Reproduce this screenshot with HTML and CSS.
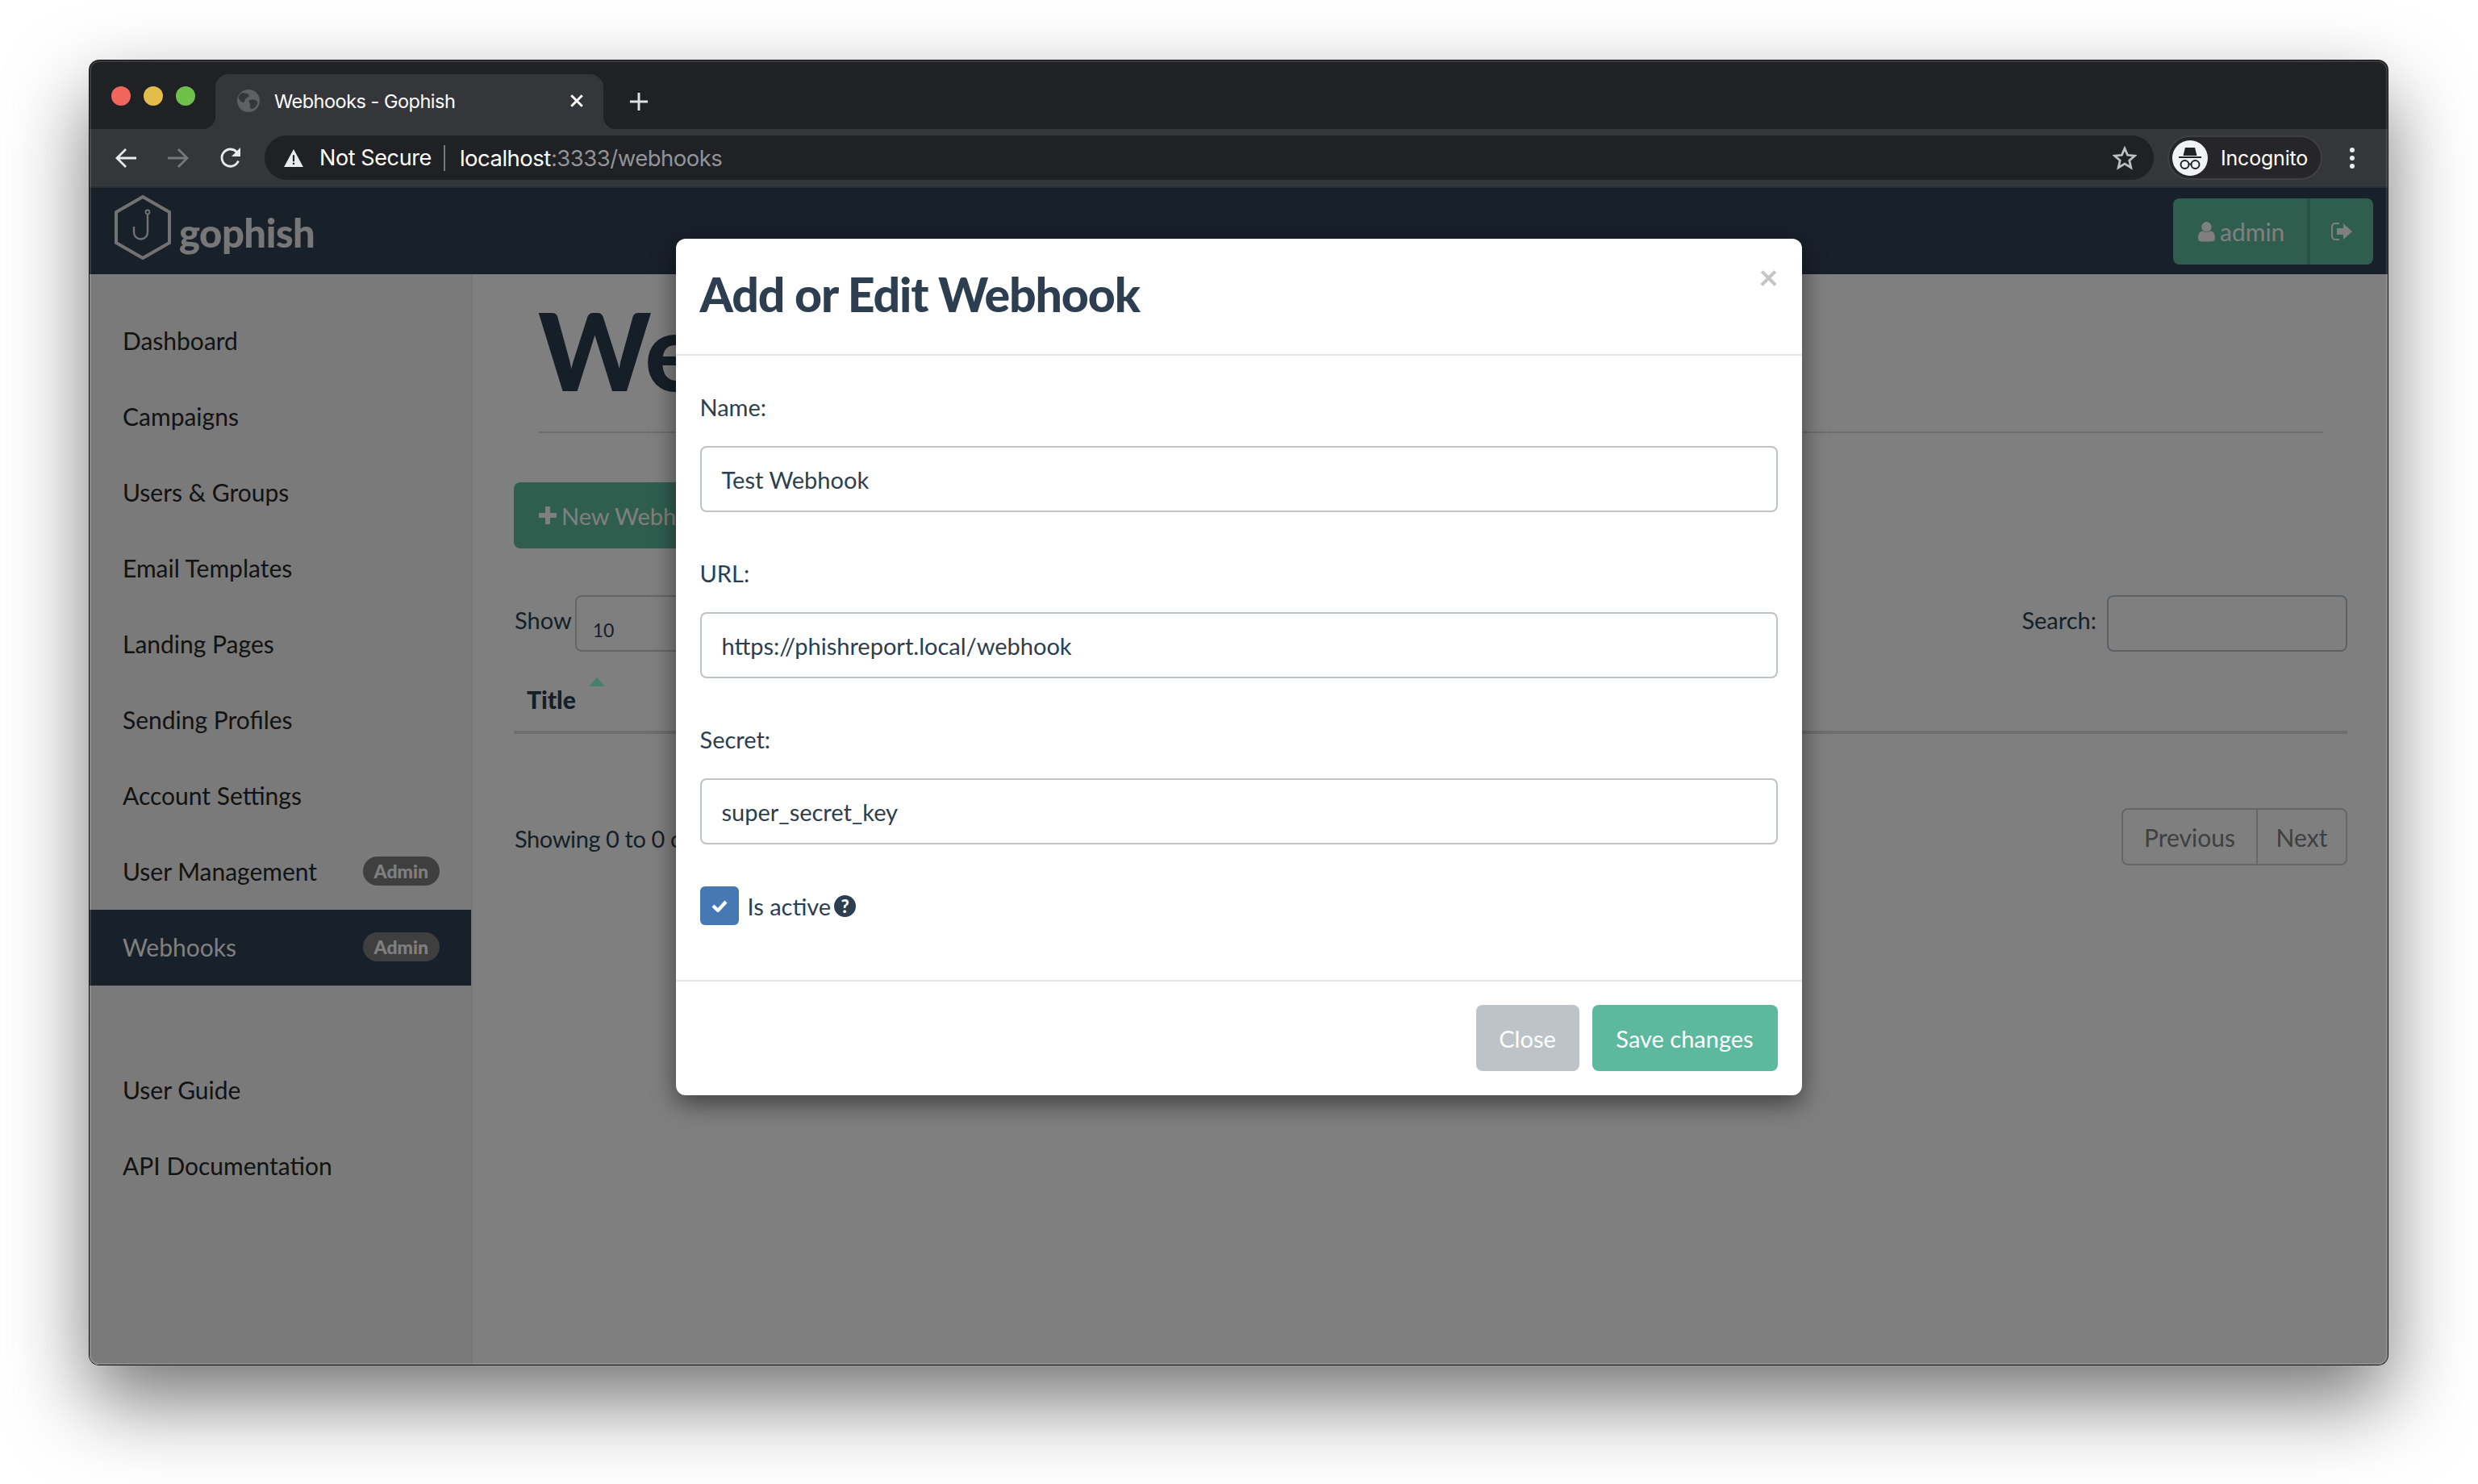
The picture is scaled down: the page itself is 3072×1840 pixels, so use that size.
FILE: index.html
```html
<!DOCTYPE html>
<html lang="en">
<head>
    <meta charset="UTF-8">
    <title>Webhooks - Gophish</title>
    <link rel="stylesheet" href="styles.css">
</head>
<body>
    <div class="window">
        <div class="tabstrip">
            <div class="lights">
                <span class="light red"></span>
                <span class="light yellow"></span>
                <span class="light green"></span>
            </div>
            <div class="tab">
                <svg class="favicon" viewBox="0 0 28 28">
                    <circle cx="14" cy="14" r="14" fill="#5f6064"/>
                    <path d="M6 4c3 1 6 0 8 2s-1 4-3 5-1 4-3 5-5-3-6-5 1-5 4-7zM17 13c3-1 7 0 8 2s-1 6-4 8-5 1-5-2 0-3-1-5 0-3 2-3z" fill="#35363a"/>
                </svg>
                <span class="tab-title">Webhooks - Gophish</span>
                <svg class="tab-close" viewBox="0 0 16 16"><path d="M2 2l12 12M14 2L2 14" stroke="#fff" stroke-width="2.6"/></svg>
            </div>
            <svg class="new-tab" viewBox="0 0 26 26"><path d="M13 1v24M1 13h24" stroke="#dfe1e5" stroke-width="3.2"/></svg>
        </div>

        <div class="toolbar">
            <div class="nav-btn">
                <svg viewBox="0 0 28 28"><path d="M27 14H3M14 3L3 14l11 11" fill="none" stroke="#e8eaed" stroke-width="2.8"/></svg>
            </div>
            <div class="nav-btn">
                <svg viewBox="0 0 28 28"><path d="M1 14h24M14 3l11 11-11 11" fill="none" stroke="#77787b" stroke-width="2.8"/></svg>
            </div>
            <div class="nav-btn">
                <svg viewBox="0 0 28 28"><path d="M23.5 17.5A10.6 10.6 0 1 1 21.5 6.5" fill="none" stroke="#e8eaed" stroke-width="2.8"/><path d="M26 1v11H15z" fill="#e8eaed"/></svg>
            </div>
            <div class="address">
                <svg class="warn" viewBox="0 0 26 24"><path d="M13 0l13 24H0z" fill="#e8eaed"/><path d="M11.8 8h2.4v8.500h-2.400zM11.800 18.300h2.400v2.500h-2.400z" fill="#202124"/></svg>
                <span class="not-secure">Not Secure</span>
                <span class="addr-sep"></span>
                <span class="url">localhost<span class="url-rest">:3333/webhooks</span></span>
                <svg class="star" viewBox="0 0 30 30"><path d="M15 3l3.600 8.300 9 .8-6.800 5.900 2 8.800-7.800-4.700-7.800 4.700 2-8.800-6.800-5.900 9-.8z" fill="none" stroke="#bdbfc2" stroke-width="2.800"/></svg>
            </div>
            <div class="incognito">
                <span class="avatar">
                    <svg viewBox="0 0 44 44">
                        <path d="M16 9h12l2.500 10h-17z" fill="#202124"/>
                        <path d="M8 21h28" stroke="#202124" stroke-width="2"/>
                        <circle cx="15.500" cy="30" r="5" fill="none" stroke="#202124" stroke-width="2"/>
                        <circle cx="28.500" cy="30" r="5" fill="none" stroke="#202124" stroke-width="2"/>
                        <path d="M20.500 29.500h3" stroke="#202124" stroke-width="2"/>
                    </svg>
                </span>
                <span class="incognito-label">Incognito</span>
            </div>
            <div class="menu-dots"><span></span><span></span><span></span></div>
        </div>

        <div class="viewport">
            <div class="navbar">
                <div class="brand">
                    <svg class="hex" viewBox="0 0 70 80">
                        <path d="M35 2l33 19v38L35 78 2 59V21z" fill="none" stroke="#e4e4e4" stroke-width="4"/>
                        <circle cx="41" cy="21" r="2.500" fill="none" stroke="#e4e4e4" stroke-width="1.800"/>
                        <path d="M41 24v22a8.500 8.500 0 0 1-17 0v-7" fill="none" stroke="#e4e4e4" stroke-width="2.400"/>
                    </svg>
                    <span class="brand-name">gophish</span>
                </div>
                <div class="user-btns">
                    <div class="user-btn">
                        <svg class="fa-user" viewBox="0 0 22 26"><circle cx="11" cy="7" r="6.500" fill="#fff"/><path d="M0 22c0-6 2-9 6-9.500 3 2 7 2 10 0 4 .5 6 3.500 6 9.500 0 3-2 4-4 4H4c-2 0-4-1-4-4z" fill="#fff"/></svg>
                        admin
                    </div>
                    <div class="logout-btn">
                        <svg viewBox="0 0 26 24"><path d="M10 2H5a4 4 0 0 0-4 4v12a4 4 0 0 0 4 4h5" fill="none" stroke="#fff" stroke-width="2"/><path d="M7 8h8V2l11 10-11 10v-6H7z" fill="#fff"/></svg>
                    </div>
                </div>
            </div>

            <div class="page">
                <div class="sidebar">
                    <a class="side-item">Dashboard</a>
                    <a class="side-item">Campaigns</a>
                    <a class="side-item">Users &amp; Groups</a>
                    <a class="side-item">Email Templates</a>
                    <a class="side-item">Landing Pages</a>
                    <a class="side-item">Sending Profiles</a>
                    <a class="side-item">Account Settings</a>
                    <a class="side-item">User Management <span class="badge">Admin</span></a>
                    <a class="side-item active">Webhooks <span class="badge">Admin</span></a>
                    <div class="side-sep"></div>
                    <a class="side-item">User Guide</a>
                    <a class="side-item">API Documentation</a>
                </div>

                <div class="main">
                    <div class="page-head">
                        <h1>We</h1>
                    </div>
                    <button class="new-btn">
                        <svg viewBox="0 0 24 24"><path d="M9 1h6v8h8v6h-8v8H9v-8H1V9h8z" fill="#fff"/></svg>
                        New Webho
                    </button>
                    <div class="table-tools">
                        <div class="show-len">Show <span class="len-select">10</span></div>
                        <div class="search">Search: <span class="search-box"></span></div>
                    </div>
                    <div class="table-head">
                        <span class="col-title">Title<i class="sort-arrow"></i></span>
                    </div>
                    <div class="table-foot">
                        <span class="showing">Showing 0 to 0 o</span>
                        <div class="pager">
                            <span class="pager-btn prev">Previous</span>
                            <span class="pager-btn next">Next</span>
                        </div>
                    </div>
                </div>
            </div>

            <div class="backdrop">
                <div class="modal">
                    <div class="modal-head">
                        <h2>Add or Edit Webhook</h2>
                        <span class="modal-x">&times;</span>
                    </div>
                    <div class="modal-body">
                        <label class="field-label">Name:</label>
                        <div class="field">Test Webhook</div>
                        <label class="field-label">URL:</label>
                        <div class="field">https://phishreport.local/webhook</div>
                        <label class="field-label">Secret:</label>
                        <div class="field">super_secret_key</div>
                        <div class="check-row">
                            <span class="checkbox">
                                <svg viewBox="0 0 20 16"><path d="M2 8l6 6L18 3" fill="none" stroke="#fff" stroke-width="4.200"/></svg>
                            </span>
                            <span>Is active</span>
                            <span class="help">?</span>
                        </div>
                    </div>
                    <div class="modal-foot">
                        <button class="btn btn-close">Close</button>
                        <button class="btn btn-save">Save changes</button>
                    </div>
                </div>
            </div>
        </div>
    </div>
</body>
</html>
```

FILE: styles.css
```css
* {
    box-sizing: border-box;
}
body {
    margin: 0;
    height: 100vh;
    padding: 75px 112px 148px 111px;
    display: flex;
    background: #fff;
    font-family: "Lato", "Noto Sans", sans-serif;
    overflow: hidden;
}
.window {
    flex: 1;
    position: relative;
    display: flex;
    flex-direction: column;
    border-radius: 12px;
    overflow: hidden;
    background: #202124;
    box-shadow: 0 0 0 1px #111, 0 44px 100px rgba(0, 0, 0, 0.55);
}
.window::after {
    content: "";
    position: absolute;
    inset: 0;
    border-radius: 12px;
    box-shadow: inset 0 0 0 2px rgba(255, 255, 255, 0.12);
    pointer-events: none;
}

/* browser chrome */
.tabstrip {
    height: 85px;
    display: flex;
    align-items: flex-end;
    background: #202124;
    font-family: "Inter", "Liberation Sans", sans-serif;
}
.lights {
    align-self: flex-start;
    display: flex;
    gap: 16px;
    margin: 32px 0 0 27px;
}
.light {
    width: 24px;
    height: 24px;
    border-radius: 50%;
}
.light.red { background: #f1665c; }
.light.yellow { background: #e3bd4b; }
.light.green { background: #6fc04a; }
.tab {
    position: relative;
    width: 481px;
    height: 68px;
    margin-left: 25px;
    padding: 0 24px 2px 27px;
    display: flex;
    align-items: center;
    background: #35363a;
    border-radius: 16px 16px 0 0;
    color: #fff;
}
.tab::before,
.tab::after {
    content: "";
    position: absolute;
    bottom: 0;
    width: 16px;
    height: 16px;
}
.tab::before {
    left: -16px;
    background: radial-gradient(circle at 0 0, transparent 16px, #35363a 16.5px);
}
.tab::after {
    right: -16px;
    background: radial-gradient(circle at 100% 0, transparent 16px, #35363a 16.5px);
}
.favicon {
    width: 28px;
    height: 28px;
    margin-right: 18px;
}
.tab-title {
    flex: 1;
    font-size: 23.5px;
    letter-spacing: -0.5px;
}
.tab-close {
    width: 18px;
    height: 18px;
}
.new-tab {
    width: 24px;
    height: 24px;
    margin: 0 0 22px 32px;
}
.toolbar {
    height: 73px;
    padding: 0 0 0 12px;
    display: flex;
    align-items: center;
    background: #35363a;
    border-bottom: 2px solid #2c2d30;
    font-family: "Inter", "Liberation Sans", sans-serif;
}
.nav-btn {
    width: 65px;
    display: flex;
    justify-content: center;
}
.nav-btn svg {
    width: 28px;
    height: 28px;
}
.address {
    flex: 1;
    height: 55px;
    margin-left: 10px;
    padding: 0 21px 0 24px;
    display: flex;
    align-items: center;
    background: #202124;
    border-radius: 28px;
    color: #fff;
    font-size: 27.5px;
}
.warn {
    width: 24px;
    height: 22px;
    margin-right: 20px;
}
.not-secure {
    font-size: 27px;
    letter-spacing: -0.4px;
}
.addr-sep {
    width: 2px;
    height: 32px;
    margin: 0 18px 0 15px;
    background: #77787b;
}
.url {
    flex: 1;
    letter-spacing: -0.5px;
}
.url-rest {
    color: #929497;
}
.star {
    width: 30px;
    height: 30px;
}
.incognito {
    width: 192px;
    height: 55px;
    margin-left: 17px;
    padding-left: 4px;
    display: flex;
    align-items: center;
    background: #26262a;
    border: 2px solid #3f4044;
    border-radius: 28px;
    color: #fff;
    font-size: 25px;
}
.avatar {
    width: 44px;
    height: 44px;
    margin-right: 16px;
    border-radius: 50%;
    background: #f1f3f4;
}
.avatar svg {
    display: block;
}
.incognito-label {
    letter-spacing: -0.2px;
}
.menu-dots {
    margin: 0 41px 0 34px;
    display: flex;
    flex-direction: column;
    gap: 4px;
}
.menu-dots span {
    width: 6px;
    height: 6px;
    border-radius: 50%;
    background: #e8eaed;
}

/* everything the backdrop dims */
.viewport {
    flex: 1;
    position: relative;
    display: flex;
    flex-direction: column;
    min-height: 0;
}

/* gophish navbar */
.navbar {
    height: 107px;
    padding: 0 18px 0 31px;
    display: flex;
    align-items: center;
    justify-content: space-between;
    background: #304054;
}
.brand {
    display: flex;
    align-items: center;
}
.hex {
    width: 70px;
    height: 80px;
    margin-bottom: 9px;
}
.brand-name {
    margin: 2px 0 0 10px;
    font-size: 49px;
    font-weight: 900;
    color: #eee;
    letter-spacing: -0.5px;
}
.user-btns {
    display: flex;
    height: 82px;
    border-radius: 8px;
    overflow: hidden;
    background: #5fbc9f;
    color: #fff;
    font-size: 30px;
}
.user-btn {
    width: 170px;
    padding-left: 31px;
    display: flex;
    align-items: center;
    gap: 6px;
    border-right: 4px solid #4ea68c;
}
.fa-user {
    width: 21px;
    height: 26px;
}
.logout-btn {
    width: 78px;
    display: flex;
    align-items: center;
    justify-content: center;
}
.logout-btn svg {
    width: 26px;
    height: 24px;
}

/* page under the modal */
.page {
    flex: 1;
    display: flex;
    background: #fff;
    color: #2c3e50;
    font-size: 30px;
}
.sidebar {
    width: 475px;
    padding-top: 36px;
    background: #f5f5f5;
    border-right: 2px solid #eee;
}
.side-item {
    height: 94px;
    padding: 0 39px 2px 41px;
    display: flex;
    align-items: center;
    justify-content: space-between;
    color: #262626;
}
.side-item.active {
    background: #304054;
    color: #fff;
}
.side-sep {
    height: 2px;
    margin: 41px 0 40px;
    background: #eee;
}
.badge {
    height: 36px;
    padding: 0 14px;
    display: flex;
    align-items: center;
    border-radius: 18px;
    background: #7e7e7e;
    color: #fff;
    font-size: 23px;
    font-weight: 900;
}
.main {
    flex: 1;
    padding: 0 50px 0 51px;
    font-size: 29px;
}
.page-head {
    height: 197px;
    margin: 0 30px;
    padding-top: 27px;
    border-bottom: 2px solid #ddd;
}
h1 {
    margin: 0;
    font-size: 133px;
    font-weight: 900;
    line-height: 1;
    white-space: nowrap;
}
.new-btn {
    height: 82px;
    width: 320px;
    margin-top: 61px;
    padding: 0 0 0 30px;
    display: flex;
    align-items: center;
    gap: 5px;
    border: none;
    border-radius: 8px;
    background: #5fbc9f;
    color: #fff;
    font: inherit;
}
.new-btn svg {
    width: 24px;
    height: 24px;
}
.table-tools {
    margin-top: 58px;
    display: flex;
    justify-content: space-between;
}
.show-len,
.search {
    display: flex;
    align-items: flex-start;
    gap: 4px;
    height: 70px;
    line-height: 62px;
}
.show-len {
    padding-left: 1px;
}
.len-select {
    width: 200px;
    height: 70px;
    padding: 10px 0 0 20px;
    border: 2px solid #ccc;
    border-radius: 8px;
    font-size: 23px;
}
.search {
    gap: 13px;
}
.search-box {
    width: 298px;
    height: 70px;
    border: 2px solid #bdc3c7;
    border-radius: 8px;
}
.table-head {
    height: 102px;
    padding: 41px 0 0 16px;
    border-bottom: 4px solid #ddd;
    font-size: 30px;
}
.col-title {
    position: relative;
    font-weight: 900;
}
.sort-arrow {
    position: absolute;
    left: 77px;
    top: -9px;
    border-left: 10px solid transparent;
    border-right: 10px solid transparent;
    border-bottom: 11px solid #8afedc;
}
.table-foot {
    margin-top: 92px;
    display: flex;
    justify-content: space-between;
    align-items: flex-start;
}
.showing {
    padding: 20px 0 0 1px;
    letter-spacing: -0.4px;
}
.pager {
    height: 71px;
    display: flex;
    border: 2px solid #ccc;
    border-radius: 8px;
    color: #808080;
    font-size: 30px;
}
.pager-btn {
    display: flex;
    align-items: center;
    justify-content: center;
}
.pager-btn.prev {
    width: 165px;
}
.pager-btn.next {
    width: 111px;
    border-left: 2px solid #ccc;
}

/* modal */
.backdrop {
    position: absolute;
    inset: 0;
    display: flex;
    justify-content: center;
    align-items: flex-start;
    background: rgba(0, 0, 0, 0.5);
}
.modal {
    width: 1396px;
    margin-top: 63px;
    background: #fff;
    border-radius: 12px;
    box-shadow: 0 10px 30px rgba(0, 0, 0, 0.5);
    color: #2c3e50;
    font-size: 29px;
}
.modal-head {
    position: relative;
    height: 145px;
    padding: 33px 30px 0;
    border-bottom: 2px solid #e5e5e5;
}
h2 {
    margin: 0;
    font-size: 59px;
    font-weight: 900;
    line-height: 72px;
    letter-spacing: -1.15px;
    white-space: nowrap;
}
.modal-x {
    position: absolute;
    top: 26px;
    right: 29px;
    color: #c4c4c4;
    font-size: 42px;
    font-weight: 700;
    line-height: 1;
}
.modal-body {
    height: 774px;
    padding: 46px 30px 0;
}
.field-label {
    display: block;
    height: 40px;
    line-height: 36px;
    margin-bottom: 26px;
}
.field {
    height: 82px;
    margin-bottom: 58px;
    padding: 0 25px;
    display: flex;
    align-items: center;
    border: 2px solid #bdc3c7;
    border-radius: 8px;
}
.check-row {
    display: flex;
    align-items: center;
    margin-top: -6px;
}
.checkbox {
    width: 48px;
    height: 48px;
    margin-right: 11px;
    display: flex;
    align-items: center;
    justify-content: center;
    background: #4679b3;
    border-radius: 6px;
}
.checkbox svg {
    width: 20px;
    height: 16px;
}
.help {
    width: 27px;
    height: 27px;
    margin-left: 4px;
    display: flex;
    align-items: center;
    justify-content: center;
    border-radius: 50%;
    background: #2c3e50;
    color: #fff;
    font-size: 22px;
    font-weight: 900;
}
.modal-foot {
    height: 143px;
    padding: 29px 30px 0;
    display: flex;
    justify-content: flex-end;
    gap: 16px;
    border-top: 2px solid #e5e5e5;
}
.btn {
    height: 82px;
    padding: 0;
    border: none;
    border-radius: 8px;
    color: #fff;
    font: inherit;
    white-space: nowrap;
}
.btn-close {
    width: 128px;
    background: #bdc3c7;
}
.btn-save {
    width: 230px;
    background: #5cb99e;
}
```
